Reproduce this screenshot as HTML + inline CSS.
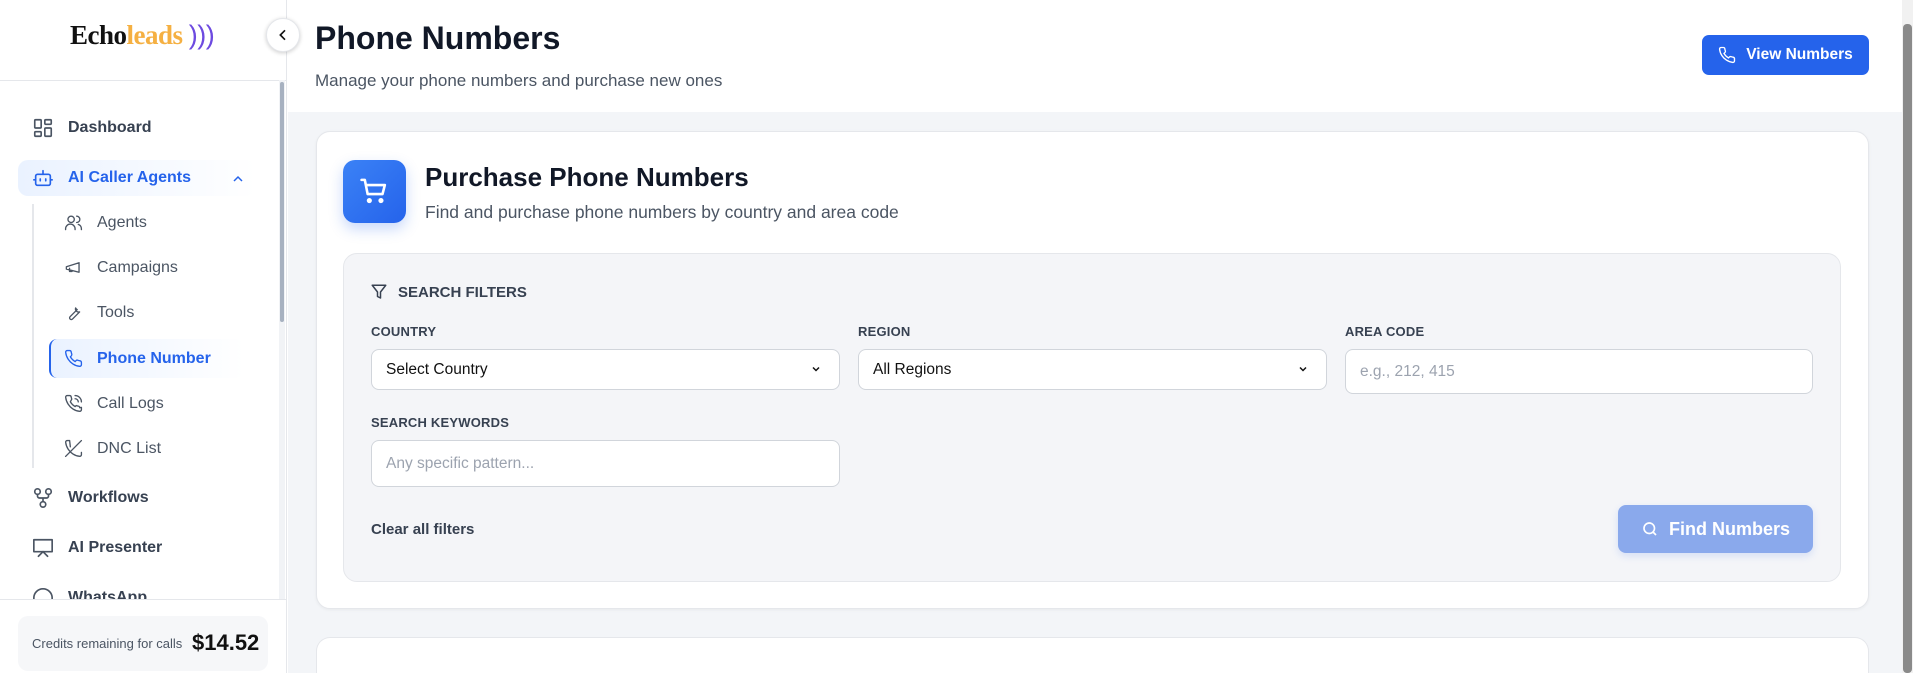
<!DOCTYPE html>
<html style="width:1913px;height:673px;overflow:hidden"><head><meta charset="utf-8"><style>
*{box-sizing:border-box;margin:0;padding:0}
body{width:1913px;height:673px;overflow:hidden;font-family:"Liberation Sans",sans-serif;background:#fff;position:relative;color:#111827}
.a{position:absolute}
.side{left:0;top:0;width:287px;height:673px;background:#fff;border-right:1px solid #e5e7eb}
.nav{position:absolute;display:flex;align-items:center;font-size:16px;color:#374151}
.nav svg{width:22px;height:22px;fill:none;stroke:#4b5563;stroke-width:1.8;stroke-linecap:round;stroke-linejoin:round}
.sub{position:absolute;display:flex;align-items:center;font-size:16px;color:#4b5563}
.sub svg{width:19px;height:19px;fill:none;stroke:#4b5563;stroke-width:1.7;stroke-linecap:round;stroke-linejoin:round}
.lbl{position:absolute;font-size:13px;font-weight:bold;color:#374151;letter-spacing:.2px}
.inp{position:absolute;background:#fff;border:1px solid #d1d5db;border-radius:8px;font-size:15.5px;display:flex;align-items:center;padding-left:14px;color:#111}
</style></head><body>
<div class="a side">
  <div class="a" style="left:70px;top:20px;font-family:'Liberation Serif',serif;font-weight:bold;font-size:27px;letter-spacing:-.5px"><span style="color:#111">Echo</span><span style="color:#f5b042">leads</span> <span style="color:#6d4ae0;font-family:'Liberation Sans';font-weight:normal">)))</span></div>
  <div class="a" style="left:0;top:80px;width:287px;height:1px;background:#e5e7eb"></div>
  <div class="a" style="left:279px;top:80px;width:6px;height:519px;background:#f1f3f6"></div>
  <div class="a" style="left:280px;top:82px;width:4px;height:240px;background:#a7b1c0;border-radius:2px"></div>

  <div class="nav" style="left:32px;top:117px"><svg viewBox="0 0 24 24"><rect x="3" y="3" width="7" height="9" rx="1"/><rect x="14" y="3" width="7" height="5" rx="1"/><rect x="14" y="12" width="7" height="9" rx="1"/><rect x="3" y="16" width="7" height="5" rx="1"/></svg><span style="margin-left:14px;font-weight:bold">Dashboard</span></div>

  <div class="a" style="left:18px;top:160px;width:238px;height:36px;border-radius:10px;background:linear-gradient(90deg,#eaf2ff,#fff)"></div>
  <div class="nav" style="left:32px;top:167px;color:#2563eb"><svg viewBox="0 0 24 24" style="stroke:#2563eb"><rect x="4" y="8" width="16" height="12" rx="2"/><path d="M12 8V4M2 14h2M20 14h2M9 13v2M15 13v2"/></svg><span style="margin-left:14px;font-weight:bold">AI Caller Agents</span></div>
  <svg class="a" style="left:230px;top:171px" width="16" height="16" viewBox="0 0 24 24" fill="none" stroke="#2563eb" stroke-width="2.2"><path d="M6 15l6-6 6 6"/></svg>

  <div class="a" style="left:32px;top:204px;width:2px;height:264px;background:#e5e7eb"></div>
  <div class="sub" style="left:64px;top:213px"><svg viewBox="0 0 24 24"><circle cx="9" cy="8" r="4"/><path d="M2 21v-1a6 6 0 0 1 12 0v1M16 4a4 4 0 0 1 0 8M22 21v-1a6 6 0 0 0-4-5.6"/></svg><span style="margin-left:14px">Agents</span></div>
  <div class="sub" style="left:64px;top:258px"><svg viewBox="0 0 24 24"><path d="M3 11l16-5v12L3 14z M7 13v4h3"/></svg><span style="margin-left:14px">Campaigns</span></div>
  <div class="sub" style="left:64px;top:303px"><svg viewBox="0 0 24 24"><path d="M14.7 6.3a4 4 0 0 0 5 5l-9 9a2 2 0 0 1-3-3l9-9a4 4 0 0 1-2-2z"/></svg><span style="margin-left:14px">Tools</span></div>
  <div class="a" style="left:49px;top:339px;width:195px;height:39px;border-radius:8px;border-left:2px solid #2563eb;background:linear-gradient(90deg,#eaf2ff,#fff)"></div>
  <div class="sub" style="left:64px;top:349px;color:#2563eb;font-weight:bold"><svg viewBox="0 0 24 24" style="stroke:#2563eb"><path d="M22 16.9v3a2 2 0 0 1-2.2 2 19.8 19.8 0 0 1-8.6-3.1 19.5 19.5 0 0 1-6-6A19.8 19.8 0 0 1 2.1 4.2 2 2 0 0 1 4.1 2h3a2 2 0 0 1 2 1.7c.1 1 .4 1.9.7 2.8a2 2 0 0 1-.5 2.1L8 9.9a16 16 0 0 0 6 6l1.3-1.3a2 2 0 0 1 2.1-.4c.9.3 1.8.6 2.8.7a2 2 0 0 1 1.7 2z"/></svg><span style="margin-left:14px">Phone Number</span></div>
  <div class="sub" style="left:64px;top:394px"><svg viewBox="0 0 24 24"><path d="M22 16.9v3a2 2 0 0 1-2.2 2 19.8 19.8 0 0 1-8.6-3.1 19.5 19.5 0 0 1-6-6A19.8 19.8 0 0 1 2.1 4.2 2 2 0 0 1 4.1 2h3a2 2 0 0 1 2 1.7c.1 1 .4 1.9.7 2.8L8 9.9a16 16 0 0 0 6 6l1.3-1.3c.9.3 1.8.6 2.8.7a2 2 0 0 1 1.7 2zM14 2a8 8 0 0 1 8 8M14 6a4 4 0 0 1 4 4"/></svg><span style="margin-left:14px">Call Logs</span></div>
  <div class="sub" style="left:64px;top:439px"><svg viewBox="0 0 24 24"><path d="M22 16.9v3a2 2 0 0 1-2.2 2 19.8 19.8 0 0 1-8.6-3.1 19.5 19.5 0 0 1-6-6A19.8 19.8 0 0 1 2.1 4.2 2 2 0 0 1 4.1 2h3L8 9.9M22 2L2 22"/></svg><span style="margin-left:14px">DNC List</span></div>

  <div class="nav" style="left:32px;top:487px"><svg viewBox="0 0 24 24"><circle cx="6" cy="5" r="3"/><circle cx="18" cy="5" r="3"/><circle cx="12" cy="19" r="3"/><path d="M6 8v2a2 2 0 0 0 2 2h8a2 2 0 0 0 2-2V8M12 12v4"/></svg><span style="margin-left:14px;font-weight:bold">Workflows</span></div>
  <div class="nav" style="left:32px;top:537px"><svg viewBox="0 0 24 24"><rect x="2" y="3" width="20" height="13"/><path d="M7 21l5-5 5 5"/></svg><span style="margin-left:14px;font-weight:bold">AI Presenter</span></div>
  <div class="a" style="left:0;top:585px;width:279px;height:14px;overflow:hidden"><div class="nav" style="left:32px;top:2px"><svg viewBox="0 0 24 24"><circle cx="12" cy="12" r="10"/></svg><span style="margin-left:14px;font-weight:bold">WhatsApp</span></div></div>
  <div class="a" style="left:0;top:599px;width:287px;height:1px;background:#e5e7eb"></div>
  <div class="a" style="left:18px;top:616px;width:250px;height:55px;border-radius:10px;background:#f6f7f9"></div>
  <div class="a" style="left:32px;top:636px;font-size:13px;color:#4b5563">Credits remaining for calls</div>
  <div class="a" style="left:192px;top:630px;font-size:22px;font-weight:bold;color:#111">$14.52</div>
</div>

<div class="a" style="left:266px;top:18px;width:34px;height:34px;border-radius:50%;background:#fff;box-shadow:0 1px 4px rgba(0,0,0,.2);border:1px solid #e5e7eb"></div>
<svg class="a" style="left:275px;top:27px" width="16" height="16" viewBox="0 0 24 24" fill="none" stroke="#111" stroke-width="2.5"><path d="M15 5l-7 7 7 7"/></svg>

<div class="a" style="left:288px;top:112px;width:1614px;height:561px;background:#f3f5f8"></div>
<div class="a" style="left:315px;top:20px;font-size:32px;font-weight:bold;color:#111827">Phone Numbers</div>
<div class="a" style="left:315px;top:71px;font-size:17px;color:#4b5563">Manage your phone numbers and purchase new ones</div>
<div class="a" style="left:1702px;top:35px;width:167px;height:40px;border-radius:7px;background:#2563eb;color:#fff;font-size:15.5px;font-weight:bold;display:flex;align-items:center;justify-content:center"><svg width="18" height="18" viewBox="0 0 24 24" fill="none" stroke="#fff" stroke-width="1.8" style="margin-right:10px"><path d="M22 16.9v3a2 2 0 0 1-2.2 2 19.8 19.8 0 0 1-8.6-3.1 19.5 19.5 0 0 1-6-6A19.8 19.8 0 0 1 2.1 4.2 2 2 0 0 1 4.1 2h3a2 2 0 0 1 2 1.7c.1 1 .4 1.9.7 2.8a2 2 0 0 1-.5 2.1L8 9.9a16 16 0 0 0 6 6l1.3-1.3a2 2 0 0 1 2.1-.4c.9.3 1.8.6 2.8.7a2 2 0 0 1 1.7 2z"/></svg>View Numbers</div>

<div class="a" style="left:316px;top:131px;width:1553px;height:478px;background:#fff;border:1px solid #e5e7eb;border-radius:14px;box-shadow:0 1px 3px rgba(0,0,0,.05)"></div>
<div class="a" style="left:343px;top:160px;width:63px;height:63px;border-radius:12px;background:linear-gradient(135deg,#3b82f6,#2563eb);box-shadow:0 6px 14px rgba(37,99,235,.25)"></div>
<svg class="a" style="left:359px;top:176px" width="31" height="31" viewBox="0 0 24 24" fill="none" stroke="#fff" stroke-width="2" stroke-linecap="round" stroke-linejoin="round"><path d="M2 3h2.5l2.2 11h11.5L20 7H6"/><circle cx="8" cy="19" r="1" fill="#fff"/><circle cx="17" cy="19" r="1" fill="#fff"/></svg>
<div class="a" style="left:425px;top:162px;font-size:26px;font-weight:bold;color:#111827">Purchase Phone Numbers</div>
<div class="a" style="left:425px;top:202px;font-size:17.5px;color:#4b5563">Find and purchase phone numbers by country and area code</div>

<div class="a" style="left:343px;top:253px;width:1498px;height:329px;background:#f4f5f8;border:1px solid #e5e7eb;border-radius:14px"></div>
<svg class="a" style="left:370px;top:283px" width="18" height="18" viewBox="0 0 24 24" fill="none" stroke="#374151" stroke-width="2" stroke-linejoin="round"><path d="M3 3h18l-7 9v8l-4-2v-6z"/></svg>
<div class="a" style="left:398px;top:284px;font-size:15px;font-weight:bold;color:#374151">SEARCH FILTERS</div>

<div class="lbl" style="left:371px;top:324px">COUNTRY</div>
<div class="lbl" style="left:858px;top:324px">REGION</div>
<div class="lbl" style="left:1345px;top:324px">AREA CODE</div>
<div class="inp" style="left:371px;top:349px;width:469px;height:41px">Select Country</div>
<svg class="a" style="left:810px;top:363px" width="12" height="12" viewBox="0 0 24 24" fill="none" stroke="#111" stroke-width="3"><path d="M6 9l6 6 6-6"/></svg>
<div class="inp" style="left:858px;top:349px;width:469px;height:41px">All Regions</div>
<svg class="a" style="left:1297px;top:363px" width="12" height="12" viewBox="0 0 24 24" fill="none" stroke="#111" stroke-width="3"><path d="M6 9l6 6 6-6"/></svg>
<div class="inp" style="left:1345px;top:349px;width:468px;height:45px;color:#9ca3af">e.g., 212, 415</div>

<div class="lbl" style="left:371px;top:415px">SEARCH KEYWORDS</div>
<div class="inp" style="left:371px;top:440px;width:469px;height:47px;color:#9ca3af">Any specific pattern...</div>
<div class="a" style="left:371px;top:521px;font-size:15px;font-weight:bold;color:#374151">Clear all filters</div>
<div class="a" style="left:1618px;top:505px;width:195px;height:48px;border-radius:8px;background:#8aa9ec;color:#fff;font-size:18px;font-weight:bold;display:flex;align-items:center;justify-content:center;box-shadow:0 3px 8px rgba(37,99,235,.15)"><svg width="18" height="18" viewBox="0 0 24 24" fill="none" stroke="#fff" stroke-width="2.2" style="margin-right:10px"><circle cx="11" cy="11" r="7"/><path d="M20 20l-4-4"/></svg>Find Numbers</div>

<div class="a" style="left:316px;top:637px;width:1553px;height:36px;background:#fff;border:1px solid #e5e7eb;border-bottom:none;border-radius:14px 14px 0 0"></div>

<div class="a" style="left:1902px;top:0;width:11px;height:673px;background:#f1f1f1"></div>
<div class="a" style="left:1903px;top:24px;width:9px;height:649px;background:#8a8a8a;border-radius:4px"></div>
</body></html>
